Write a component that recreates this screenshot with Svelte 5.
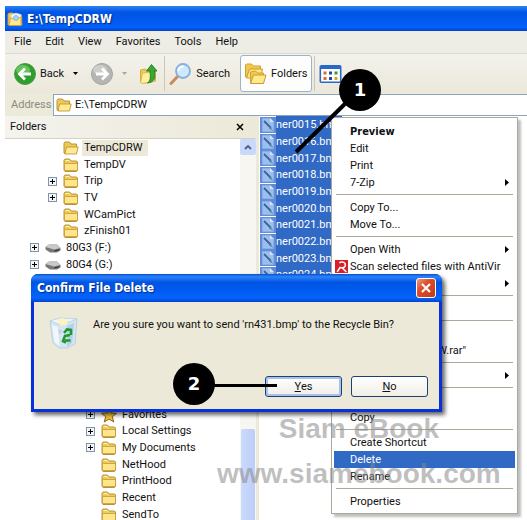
<script lang="ts">
	type Node = { label: string; depth: number; icon?: string; expandable?: boolean; selected?: boolean };
	type Entry = { label?: string; sep?: boolean; arrow?: boolean; bold?: boolean; active?: boolean; icon?: boolean };

	const menus = ['File', 'Edit', 'View', 'Favorites', 'Tools', 'Help'];

	const upper: Node[] = [
		{ label: 'TempCDRW', depth: 2, icon: 'open', selected: true },
		{ label: 'TempDV', depth: 2 },
		{ label: 'Trip', depth: 2, expandable: true },
		{ label: 'TV', depth: 2, expandable: true },
		{ label: 'WCamPict', depth: 2 },
		{ label: 'zFinish01', depth: 2 },
		{ label: '80G3 (F:)', depth: 1, icon: 'drive', expandable: true },
		{ label: '80G4 (G:)', depth: 1, icon: 'drive', expandable: true }
	];

	const lower: Node[] = [
		{ label: 'Favorites', depth: 4, icon: 'star', expandable: true },
		{ label: 'Local Settings', depth: 4, expandable: true },
		{ label: 'My Documents', depth: 4, expandable: true },
		{ label: 'NetHood', depth: 4 },
		{ label: 'PrintHood', depth: 4 },
		{ label: 'Recent', depth: 4 },
		{ label: 'SendTo', depth: 4 }
	];

	const files = Array.from({ length: 10 }, (_, i) => `ner00${15 + i}.bmp`);

	const entries: Entry[] = [
		{ label: 'Preview', bold: true },
		{ label: 'Edit' },
		{ label: 'Print' },
		{ label: '7-Zip', arrow: true },
		{ sep: true },
		{ label: 'Copy To...' },
		{ label: 'Move To...' },
		{ sep: true },
		{ label: 'Open With', arrow: true },
		{ label: 'Scan selected files with AntiVir', icon: true },
		{ label: '', arrow: true },
		{ sep: true },
		{ label: '' },
		{ sep: true },
		{ label: '' },
		{ label: 'Add to "TempCDRW.rar"' },
		{ sep: true },
		{ label: '', arrow: true },
		{ sep: true },
		{ label: '' },
		{ label: 'Copy' },
		{ sep: true },
		{ label: 'Create Shortcut' },
		{ label: 'Delete', active: true },
		{ label: 'Rename' },
		{ sep: true },
		{ label: 'Properties' }
	];
</script>

{#snippet folder()}
	<svg class="icon" viewBox="0 0 16 16" aria-hidden="true">
		<path d="M1 13V3.5L2 2h4.5L8 4h5.5l1 1v8.5l-1 1H2z" fill="#efc955" stroke="#b8923a" />
		<path d="M1.500 13.500V6.500h13v7z" fill="#ffe68c" stroke="#c29a36" stroke-width=".8" />
		<path d="M2.5 3.5h3.5l1.5 1.7" fill="none" stroke="#fff3b8" />
	</svg>
{/snippet}

{#snippet openFolder()}
	<svg class="icon" viewBox="0 0 16 16" aria-hidden="true">
		<path d="M1 13V3.5L2 2h4.5L8 4h5.5v9.5H2z" fill="#efc955" stroke="#b8923a" />
		<path d="M2 14 3.500 7h11.700l-1.700 7z" fill="#ffe993" stroke="#b98e2c" stroke-width=".8" />
	</svg>
{/snippet}

{#snippet drive()}
	<svg class="icon" viewBox="0 0 16 16" aria-hidden="true">
		<path d="M.5 7 4 4.5h8L15.5 8v2.5L12 12.5H5L.5 9.5z" fill="#777" />
		<path d="M.5 7 4 4.5h8L15.5 8 9 9.5z" fill="#c9c9c9" />
		<path d="M9 10.5 14.5 9v1l-5 1.5z" fill="#333" />
	</svg>
{/snippet}

{#snippet row(node: Node)}
	<li class="node depth-{node.depth}">
		{#if node.expandable}
			<button class="toggle" aria-label="Expand {node.label}">
				<svg viewBox="0 0 9 9" aria-hidden="true">
					<rect x=".5" y=".5" width="8" height="8" fill="#f6f5f0" stroke="#7b93b5" />
					<path d="M2 4.5h5M4.5 2v5" stroke="#000" />
				</svg>
			</button>
		{:else}
			<span class="toggle"></span>
		{/if}
		{#if node.icon === 'drive'}
			{@render drive()}
		{:else if node.icon === 'open'}
			{@render openFolder()}
		{:else if node.icon === 'star'}
			<svg class="icon" viewBox="0 0 16 16" aria-hidden="true">
				<path
					d="m8 1 2 5 5.5.3-4.2 3.5 1.5 5.2L8 12l-4.800 3 1.500-5.200L.5 6.300 6 6z"
					fill="#f5c33b"
					stroke="#8a6414"
				/>
			</svg>
		{:else}
			{@render folder()}
		{/if}
		<span class="node-label" class:selected={node.selected}>{node.label}</span>
	</li>
{/snippet}

<div class="page">
	<div class="window">
		<header class="titlebar">
			<svg class="icon" viewBox="0 0 16 16" aria-hidden="true">
				<path d="M1 14V3l1-1h4l2 2h6.5l.5 10z" fill="#f1cf62" stroke="#c99c35" />
				<path d="M4 3.5 9 2l5 1.5V9H4z" fill="#f3f7fb" stroke="#b9c4cc" stroke-width=".6" />
				<path d="M2 14.5 3.5 7 8 8.5 14 6v8.5z" fill="#ffe993" stroke="#c99c35" stroke-width=".8" />
				<circle cx="9" cy="7" r="2.5" fill="#a9d4f5" stroke="#7eb0dc" stroke-width=".8" />
			</svg>
			<h1>E:\TempCDRW</h1>
		</header>

		<nav class="menubar">
			{#each menus as menu}
				<button>{menu}</button>
			{/each}
		</nav>

		<div class="toolbar">
			<button class="tool back">
				<svg class="round" viewBox="0 0 22 22" aria-hidden="true">
					<circle cx="11" cy="11" r="10.5" fill="#2f9e2f" stroke="#4c9a45" />
					<ellipse cx="9" cy="7" rx="7" ry="5" fill="#7fd070" opacity=".7" />
					<path d="M17 11H6M11 5.5 5.5 11l5.5 5.5" fill="none" stroke="#fff" stroke-width="2.8" />
				</svg>
				<span>Back</span>
				<svg class="caret" viewBox="0 0 5 3" aria-hidden="true"><path d="M0 0h5L2.5 3z" /></svg>
			</button>
			<button class="tool forward" aria-label="Forward" disabled>
				<svg class="round" viewBox="0 0 22 22" aria-hidden="true">
					<circle cx="11" cy="11" r="10.5" fill="#b5b5b3" stroke="#a4a4a2" />
					<ellipse cx="9" cy="7" rx="7" ry="5" fill="#d8d8d6" opacity=".7" />
					<path d="M5 11h11M11 5.5l5.5 5.5-5.5 5.5" fill="none" stroke="#fff" stroke-width="2.8" />
				</svg>
				<svg class="caret dim" viewBox="0 0 5 3" aria-hidden="true"><path d="M0 0h5L2.5 3z" /></svg>
			</button>
			<button class="tool up" aria-label="Up">
				<svg class="big" viewBox="0 0 22 22" aria-hidden="true">
					<path d="M3 19V7l5-1 1 2 9-1v11L5 20.5z" fill="#eecb55" stroke="#d3ad42" />
					<path d="M3 19.5 5 10l13-1-1.5 9.5L5 20.5z" fill="#fff0a0" stroke="#dcbb52" />
					<path
						d="M10 20c3-2 3-5 2.500-12H9L14 1.500 19.500 8H17c1 7 0 11-7 12z"
						fill="#35a835"
						stroke="#17731d"
						stroke-width=".8"
					/>
				</svg>
			</button>
			<span class="divider"></span>
			<button class="tool search">
				<svg class="big" viewBox="0 0 22 22" aria-hidden="true">
					<path d="m1.5 20.5 6.5-7" stroke="#c98a5c" stroke-width="3" stroke-linecap="round" />
					<circle cx="13.5" cy="8" r="7" fill="#cdeafc" stroke="#88aede" stroke-width="1.8" />
					<path d="M9 8c0-3 2-4.5 5-4.5" fill="none" stroke="#fff" stroke-width="2" />
				</svg>
				<span>Search</span>
			</button>
			<button class="tool folders" aria-pressed="true">
				<svg class="big" viewBox="0 0 22 22" aria-hidden="true">
					<path d="M1 14V2l1-1h5l2 2h7v11z" fill="#f2c94c" stroke="#cfa238" />
					<path d="M2 15 5 6h13l-2 9z" fill="#ffe685" stroke="#c79c35" />
					<path d="M6 20V9l5-1 2 2h6v10z" fill="#f2c94c" stroke="#cfa238" />
					<path d="m6 20.5 3-8.5h12.5L19 20.5z" fill="#ffe98c" stroke="#c79c35" />
				</svg>
				<span>Folders</span>
			</button>
			<span class="divider"></span>
			<button class="tool views" aria-label="Views">
				<svg class="big" viewBox="0 0 22 22" aria-hidden="true">
					<rect x=".8" y="2.8" width="20.4" height="16.5" rx="1" fill="#fff" stroke="#2869c8" stroke-width="1.6" />
					<path d="M1 4.5h20" stroke="#2869c8" stroke-width="3" />
					<path d="M4 8.5h3v3H4zM4 14h3v3H4z" fill="#e2643c" />
					<path d="M9.5 8.5h3v3h-3zM9.5 14h3v3h-3z" fill="#2547a8" />
					<path d="M15 8.5h3v3h-3z" fill="#369a36" />
					<path d="M15 14h3v3h-3z" fill="#d9a32a" />
				</svg>
			</button>
		</div>

		<div class="address">
			<label for="path">Address</label>
			<div class="field">
				{@render openFolder()}
				<input id="path" type="text" value="E:\TempCDRW" />
			</div>
		</div>

		<main>
			<aside>
				<div class="pane-head">
					<h2>Folders</h2>
					<button aria-label="Close">
						<svg viewBox="0 0 8 8" aria-hidden="true">
							<path d="m1 1 6 6M7 1 1 7" stroke="#000" stroke-width="1.5" />
						</svg>
					</button>
				</div>
				<div class="pane-body">
					<ul class="tree">
						{#each upper as node}
							{@render row(node)}
						{/each}
						<!-- branches covered by the dialog -->
						{#each { length: 8 } as _}
							<li class="node"></li>
						{/each}
						{#each lower as node}
							{@render row(node)}
						{/each}
					</ul>
					<div class="scrollbar">
						<button aria-label="Scroll up">
							<svg viewBox="0 0 8 5" aria-hidden="true">
								<path d="m1 4 3-3 3 3" fill="none" stroke="#4d6185" stroke-width="1.8" />
							</svg>
						</button>
						<span class="thumb"></span>
					</div>
				</div>
			</aside>

			<ul class="files">
				{#each files as file}
					<li class="file">
						<svg class="icon" viewBox="0 0 16 16" aria-hidden="true">
							<path d="M0 0h16v16H0z" fill="#5f8bd6" />
							<path d="M2 1h8l4 4v10H2z" fill="#9dbff0" stroke="#6d97dc" stroke-width=".8" />
							<path d="M10 1v4h4z" fill="#d5e4fb" />
							<path d="m4 4 7 7" stroke="#3c6496" stroke-width="1.8" />
							<path d="m10 9.5 3.5 4.5L9 11.5z" fill="#4b8c9c" />
						</svg>
						<span>{file}</span>
					</li>
				{/each}
			</ul>
		</main>
	</div>

	<div class="context" role="menu">
		{#each entries as entry}
			{#if entry.sep}
				<hr />
			{:else}
				<button role="menuitem" class="entry" class:bold={entry.bold} class:active={entry.active}>
					<span class="entry-icon">
						{#if entry.icon}
							<svg viewBox="0 0 12 12" aria-hidden="true">
								<rect width="12" height="12" fill="#d8202a" />
								<path
									d="M2 11 5 6.5M4 2.5C7 1 10 2.5 9.5 5 9 7 7 7.5 5 7M7 7.5l3.5 3.5"
									fill="none"
									stroke="#fff"
									stroke-width="1.4"
								/>
							</svg>
						{/if}
					</span>
					<span class="entry-label">{entry.label}</span>
					{#if entry.arrow}
						<svg class="arrow" viewBox="0 0 4 7" aria-hidden="true"><path d="M0 0v7l4-3.5z" /></svg>
					{/if}
				</button>
			{/if}
		{/each}
	</div>

	<div class="dialog" role="dialog" aria-labelledby="dialog-title">
		<div class="dialog-title">
			<h2 id="dialog-title">Confirm File Delete</h2>
			<button aria-label="Close">
				<svg viewBox="0 0 12 12" aria-hidden="true">
					<path d="m2 2 8 8M10 2l-8 8" stroke="#fff" stroke-width="2.2" />
				</svg>
			</button>
		</div>
		<div class="dialog-body">
			<div class="message">
				<svg class="bin" viewBox="0 0 30 32" aria-hidden="true">
					<path d="m1 4 10-1 17-1-2 25-8 4H10l-6-5z" fill="#d3e6f3" stroke="#b3cbdc" stroke-width=".8" />
					<path d="m1 4 11 4 16-6-17-1z" fill="#eef8fd" stroke="#b3cfe0" stroke-width=".8" />
					<path d="m8 4 5-3 7 2-3 5-5 1z" fill="#fdf3c0" />
					<path d="m3 8 2.5 17 5 4.5L9 10z" fill="#eff8fd" />
					<path d="m25 6-2 20-5 4V9z" fill="#a5c8e4" opacity=".7" />
					<path d="m9 12 5 2-4 4z" fill="#d5c9ee" />
					<path
						d="m15 16 3-3.5 4 .5v5M21 18l-5 1-2 5 3 1.5M16 23.5h5.5"
						fill="none"
						stroke="#22982c"
						stroke-width="2.6"
					/>
				</svg>
				<p>Are you sure you want to send 'rn431.bmp' to the Recycle Bin?</p>
			</div>
			<div class="actions">
				<button class="default"><u>Y</u>es</button>
				<button><u>N</u>o</button>
			</div>
		</div>
	</div>

	<div class="watermark">
		<span>Siam eBook</span>
		<span>www.siamebook.com</span>
	</div>

	<svg class="pointer" viewBox="0 0 90 90" aria-hidden="true">
		<path d="M65 25 5 84" stroke="#000" stroke-width="4" />
	</svg>
	<span class="badge one">1</span>
	<span class="stem"></span>
	<span class="badge two">2</span>
</div>

<style>
	:global(body) {
		margin: 0;
		overflow: hidden;
		background: #fff;
	}

	.page {
		position: relative;
		height: 100vh;
		overflow: hidden;
		font-family: Roboto, 'Noto Sans', sans-serif;
		font-size: 11px;
		line-height: 16px;
		color: #111;
	}

	button,
	input {
		font: inherit;
		color: inherit;
		padding: 0;
		border: 0;
		background: none;
	}

	h1,
	h2,
	p,
	ul {
		margin: 0;
		padding: 0;
		font-size: inherit;
		font-weight: normal;
		list-style: none;
	}

	svg {
		display: block;
		flex-shrink: 0;
	}

	.icon {
		width: 16px;
		height: 16px;
	}

	.window {
		box-sizing: border-box;
		height: 100%;
		padding: 6px 0 0 5px;
		display: flex;
		flex-direction: column;
	}

	.titlebar {
		display: flex;
		align-items: center;
		gap: 4px;
		height: 25px;
		padding-left: 2px;
		flex-shrink: 0;
		background: linear-gradient(#2b83f2, #0054e3 25%, #0259ee 60%, #0162fb 85%, #0041c4);
	}

	.titlebar h1,
	.dialog-title h2 {
		font-family: 'DejaVu Sans Condensed', 'DejaVu Sans', sans-serif;
		font-stretch: condensed;
		font-size: 12px;
		font-weight: bold;
		color: #fff;
		text-shadow: 1px 1px 1px #0a2a80;
	}

	.menubar {
		display: flex;
		gap: 14px;
		height: 22px;
		padding-left: 9px;
		flex-shrink: 0;
		background: #eeede5;
		border-bottom: 1px solid #dcdacd;
	}

	.toolbar {
		display: flex;
		align-items: center;
		height: 39px;
		padding-left: 9px;
		flex-shrink: 0;
		background: linear-gradient(#f3f2ec, #ebe8da);
	}

	.tool {
		display: flex;
		align-items: center;
		gap: 4px;
	}

	.round {
		width: 22px;
		height: 22px;
	}

	.big {
		width: 23px;
		height: 22px;
	}

	.caret {
		width: 5px;
		height: 3px;
	}

	.back .caret,
	.forward .caret {
		margin-left: 5px;
	}

	.dim {
		opacity: 0.3;
	}

	.forward {
		margin-left: 13px;
	}

	.up {
		margin-left: 10px;
	}

	.divider {
		width: 1px;
		height: 35px;
		margin: 0 4px;
		background: #c9c7ba;
	}

	.search {
		margin-right: 10px;
	}

	.folders {
		box-sizing: border-box;
		height: 37px;
		padding: 0 4px 0 3px;
		border: 1px solid #9fb2cb;
		border-radius: 3px;
		background: #fdfdfb;
	}

	.folders + .divider {
		margin-left: 2px;
	}

	.address {
		display: flex;
		align-items: center;
		height: 23px;
		flex-shrink: 0;
		background: #ecead9;
	}

	.address label {
		width: 42px;
		padding-left: 6px;
		color: #8b8a80;
	}

	.field {
		box-sizing: border-box;
		display: flex;
		align-items: center;
		gap: 3px;
		flex: 1;
		height: 22px;
		padding-left: 2px;
		border: 1px solid #8ca3c0;
		border-right: 0;
		background: #fff;
	}

	.field input {
		flex: 1;
		min-width: 0;
	}

	main {
		display: flex;
		flex: 1;
		min-height: 0;
	}

	aside {
		display: flex;
		flex-direction: column;
		width: 251px;
		flex-shrink: 0;
		border-right: 3px solid #ece9d8;
	}

	.pane-head {
		display: flex;
		align-items: center;
		justify-content: space-between;
		height: 22px;
		padding: 0 12px 0 5px;
		flex-shrink: 0;
		background: linear-gradient(90deg, #f4f3ee, #ece9d8);
		border-bottom: 1px solid #d5d2c2;
	}

	.pane-head svg {
		width: 8px;
		height: 8px;
	}

	.pane-body {
		display: flex;
		flex: 1;
		min-height: 0;
		overflow: hidden;
	}

	.tree {
		flex: 1;
	}

	.node,
	.file {
		display: flex;
		align-items: center;
		height: 17px;
	}

	.node:nth-child(3n),
	.file:nth-child(3n) {
		height: 16px;
	}

	.node {
		gap: 3px;
	}

	.depth-1 {
		padding-left: 25px;
	}

	.depth-2 {
		padding-left: 43px;
	}

	.depth-4 {
		padding-left: 81px;
	}

	.toggle {
		width: 9px;
		margin-right: 3px;
	}

	.toggle svg {
		width: 9px;
		height: 9px;
	}

	.node-label {
		padding: 0 2px;
	}

	.selected {
		padding-right: 5px;
		background: #ece9d8;
	}

	.scrollbar {
		display: flex;
		flex-direction: column;
		width: 16px;
		background: #f7f6f1;
	}

	.scrollbar button {
		display: grid;
		place-items: center;
		height: 16px;
		border-radius: 2px;
		background: #c9d8fb;
	}

	.scrollbar button svg {
		width: 8px;
		height: 5px;
	}

	.thumb {
		height: 24%;
		margin: auto 1px 0;
		border-radius: 2px 2px 0 0;
		background: linear-gradient(90deg, #cbdafd, #bccdf9);
	}

	.files {
		padding-left: 1px;
	}

	.file span {
		width: 66px;
		overflow: hidden;
		white-space: nowrap;
		line-height: 17px;
		color: #fff;
		background: #316ac5;
	}

	.context {
		position: absolute;
		top: 117px;
		left: 331px;
		box-sizing: border-box;
		width: 187px;
		padding: 5px 2px 3px;
		border: 1px solid #aca899;
		background: #fff;
		box-shadow: 3px 3px 2px #8888;
	}

	.context hr {
		height: 1px;
		margin: 3px 2px 4px;
		border: 0;
		background: #aca899;
	}

	.entry {
		display: flex;
		align-items: center;
		width: 100%;
		height: 17px;
		padding: 0 6px 0 1px;
		text-align: left;
		white-space: nowrap;
	}

	.entry-icon {
		width: 15px;
		flex-shrink: 0;
	}

	.entry-icon svg {
		width: 13px;
		height: 13px;
	}

	.entry-label {
		flex: 1;
	}

	.entry.bold {
		font-family: 'DejaVu Sans Condensed', 'DejaVu Sans', sans-serif;
		font-stretch: condensed;
		font-weight: bold;
	}

	.entry.active {
		color: #fff;
		background: #316ac5;
	}

	.arrow {
		width: 4px;
		height: 7px;
	}

	.dialog {
		position: absolute;
		top: 274px;
		left: 31px;
		box-sizing: border-box;
		width: 411px;
		padding: 0 3px 3px;
		border-radius: 7px 7px 0 0;
		background: #0831d9;
		box-shadow: 3px 3px 4px #0009;
	}

	.dialog-title {
		display: flex;
		align-items: center;
		justify-content: space-between;
		height: 28px;
		margin: 0 -3px;
		padding: 0 6px;
		border-radius: 7px 7px 0 0;
		background: linear-gradient(#0a4fd0, #2b83f8 10%, #0054e3 30%, #005bf2 60%, #0464fc 85%, #0043cf);
	}

	.dialog-title button {
		display: grid;
		place-items: center;
		box-sizing: border-box;
		width: 20px;
		height: 20px;
		border: 1px solid #fff;
		border-radius: 3px;
		background: linear-gradient(135deg, #f09a80, #dc4c28 40%, #c33a15);
	}

	.dialog-title button svg {
		width: 12px;
		height: 12px;
	}

	.dialog-body {
		padding: 15px 11px 12px 15px;
		background: #ece9d8;
	}

	.message {
		display: flex;
		gap: 14px;
	}

	.bin {
		width: 30px;
		height: 32px;
	}

	.actions {
		display: flex;
		justify-content: flex-end;
		gap: 9px;
		margin-top: 27px;
	}

	.actions button {
		box-sizing: border-box;
		width: 77px;
		height: 21px;
		border: 1px solid #1d4173;
		border-radius: 3px;
		background: linear-gradient(#fff, #efeee6);
	}

	.actions .default {
		box-shadow: inset 0 0 0 2px #a9c0ee;
	}

	.watermark {
		position: absolute;
		top: 406px;
		left: 217px;
		display: flex;
		flex-direction: column;
		align-items: center;
		font-family: 'Liberation Sans', Arial, sans-serif;
		font-size: 28px;
		line-height: 45px;
		font-weight: bold;
		color: #8888;
		pointer-events: none;
	}

	.badge {
		position: absolute;
		width: 42px;
		height: 42px;
		border-radius: 50%;
		font-family: 'DejaVu Sans', sans-serif;
		font-size: 18px;
		font-weight: bold;
		line-height: 42px;
		text-align: center;
		color: #fff;
		background: #000;
	}

	.one {
		top: 69px;
		left: 339px;
	}

	.two {
		top: 363px;
		left: 173px;
	}

	.pointer {
		position: absolute;
		top: 68px;
		left: 291px;
		width: 90px;
		height: 90px;
	}

	.stem {
		position: absolute;
		top: 384px;
		left: 210px;
		width: 67px;
		height: 3px;
		background: #000;
	}
</style>
